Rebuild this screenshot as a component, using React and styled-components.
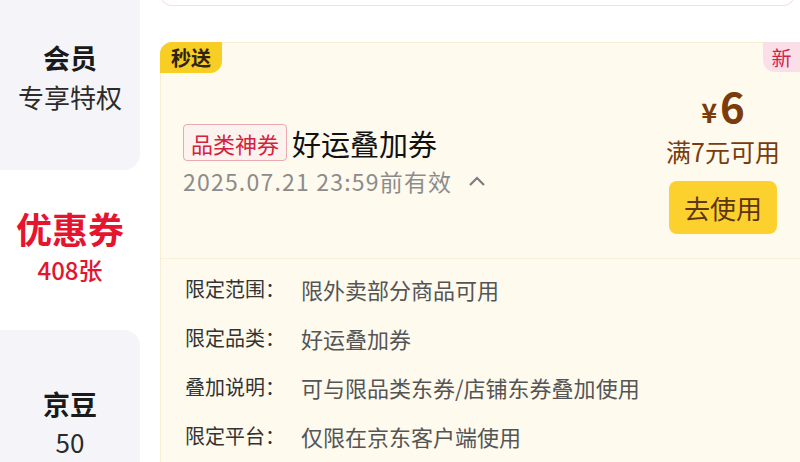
import styled, { createGlobalStyle } from "styled-components"

const GlobalStyle = createGlobalStyle`
body {
    margin: 0;
    background: #ffffff;
    font-family: "Noto Sans CJK SC", "Noto Sans", sans-serif;
}
`

const sideItems = [
    { title: "会员", sub: "专享特权", height: 170, pad: 40, gap: 3, corner: "bottom" },
    { title: "优惠券", sub: "408张", height: 160, pad: 37, gap: 6, active: true },
    { title: "京豆", sub: "50", height: 160, pad: 56, gap: 2, corner: "top" },
]

const details = [
    ["限定范围：", "限外卖部分商品可用"],
    ["限定品类：", "好运叠加券"],
    ["叠加说明：", "可与限品类东券/店铺东券叠加使用"],
    ["限定平台：", "仅限在京东客户端使用"],
]

export default function App() {
    return (
        <Page>
            <GlobalStyle />
            <Sidebar>
                {sideItems.map((item) => (
                    <SideItem key={item.title} $active={item.active} $corner={item.corner} $height={item.height} $pad={item.pad} $gap={item.gap}>
                        <SideTitle $active={item.active}>{item.title}</SideTitle>
                        <SideSub $active={item.active}>{item.sub}</SideSub>
                    </SideItem>
                ))}
            </Sidebar>
            <Main>
                <PrevCard />
                <Coupon>
                    <FastTag>秒送</FastTag>
                    <NewTag>新</NewTag>
                    <CouponHead>
                        <InfoCol>
                            <TitleRow>
                                <KindTag>品类神券</KindTag>
                                <Title>好运叠加券</Title>
                            </TitleRow>
                            <DateRow>
                                2025.07.21 23:59前有效
                                <svg width="18" height="12" viewBox="0 0 18 12">
                                    <path d="M2 10 L9 3 L16 10" fill="none" stroke="#7d7d7d" strokeWidth="2.2" />
                                </svg>
                            </DateRow>
                        </InfoCol>
                        <PriceCol>
                            <Price><small>¥</small>6</Price>
                            <Limit>满7元可用</Limit>
                            <UseButton>去使用</UseButton>
                        </PriceCol>
                    </CouponHead>
                    <DetailList>
                        {details.map(([label, value]) => (
                            <DetailRow key={label}>
                                <DetailLabel>{label}</DetailLabel>
                                <DetailValue>{value}</DetailValue>
                            </DetailRow>
                        ))}
                    </DetailList>
                </Coupon>
            </Main>
        </Page>
    )
}

const Page = styled.div`
display: flex;
width: 800px;
height: 462px;
overflow: hidden;
background: #ffffff;
`

const Sidebar = styled.div`
width: 140px;
flex-shrink: 0;
display: flex;
flex-direction: column;
margin-top: -8px;
background: #ffffff;
`

const SideItem = styled.div`
flex-shrink: 0;
height: ${(p) => p.$height + (p.$corner === "bottom" ? 8 : 0)}px;
box-sizing: border-box;
padding-top: ${(p) => p.$pad + (p.$corner === "bottom" ? 8 : 0)}px;
display: flex;
flex-direction: column;
align-items: center;
gap: ${(p) => p.$gap}px;
background: ${(p) => (p.$active ? "#ffffff" : "#f5f5f9")};
border-bottom-right-radius: ${(p) => (p.$corner === "bottom" ? "16px" : "0")};
border-top-right-radius: ${(p) => (p.$corner === "top" ? "16px" : "0")};
`

const SideTitle = styled.div`
font-size: ${(p) => (p.$active ? "36px" : "27px")};
line-height: ${(p) => (p.$active ? "42px" : "36px")};
font-weight: 700;
color: ${(p) => (p.$active ? "#e5142f" : "#1a1a1a")};
`

const SideSub = styled.div`
font-size: ${(p) => (p.$active ? "24px" : "26px")};
line-height: ${(p) => (p.$active ? "30px" : "36px")};
font-weight: ${(p) => (p.$active ? 500 : 400)};
color: ${(p) => (p.$active ? "#e5142f" : "#2b2b2b")};
`

const Main = styled.div`
flex: 1;
display: flex;
flex-direction: column;
padding-left: 20px;
& > * {
    flex-shrink: 0;
}
`

const PrevCard = styled.div`
height: 16px;
margin-top: -11px;
margin-right: 5px;
border: 1px solid #f6dde3;
border-top: none;
border-radius: 0 0 12px 12px;
background: #ffffff;
`

const Coupon = styled.div`
position: relative;
margin-top: 36px;
margin-right: -12px;
background: #fefaee;
border: 1px solid #f7efd3;
border-radius: 12px;
`

const FastTag = styled.div`
position: absolute;
top: -1px;
left: -1px;
width: 62px;
height: 31px;
display: flex;
align-items: center;
justify-content: center;
background: #f8cd24;
color: #2e2412;
font-size: 20px;
font-weight: 700;
border-radius: 12px 0 12px 0;
`

const NewTag = styled.div`
position: absolute;
top: -1px;
right: 11px;
width: 37px;
height: 30px;
display: flex;
align-items: center;
justify-content: center;
background: #fbdfe8;
color: #d01f4f;
font-size: 20px;
border-radius: 0 0 0 12px;
`

const CouponHead = styled.div`
display: flex;
justify-content: space-between;
align-items: flex-start;
height: 215px;
padding-left: 22px;
padding-right: 23px;
border-bottom: 1px solid #f7f0dc;
`

const InfoCol = styled.div`
margin-top: 81px;
display: flex;
flex-direction: column;
gap: 6px;
`

const TitleRow = styled.div`
display: flex;
align-items: center;
gap: 5px;
`

const KindTag = styled.span`
height: 35px;
display: flex;
align-items: center;
padding: 0 7px;
border: 1px solid #e9aab4;
border-radius: 4px;
background: #fdf3ee;
color: #d4213d;
font-size: 22px;
`

const Title = styled.span`
font-size: 29px;
line-height: 36px;
color: #111111;
`

const DateRow = styled.div`
display: flex;
align-items: center;
gap: 16px;
font-size: 23px;
line-height: 28px;
letter-spacing: 1.2px;
color: #8c8c8c;
`

const PriceCol = styled.div`
margin-top: 42px;
width: 130px;
display: flex;
flex-direction: column;
align-items: center;
`

const Price = styled.div`
font-size: 42px;
line-height: 40px;
font-weight: 700;
color: #7a3c0b;
small {
    font-size: 27px;
    margin-right: 3px;
}
`

const Limit = styled.div`
margin-top: 3px;
font-size: 25px;
line-height: 32px;
color: #7a3c0b;
`

const UseButton = styled.button`
margin-top: 14px;
width: 108px;
height: 53px;
border: none;
border-radius: 8px;
background: #fcd12d;
color: #5c3512;
font-family: inherit;
font-size: 26px;
`

const DetailList = styled.div`
padding: 5px 0 20px 24px;
`

const DetailRow = styled.div`
display: flex;
align-items: center;
height: 49px;
`

const DetailLabel = styled.span`
width: 116px;
font-size: 20px;
color: #333333;
`

const DetailValue = styled.span`
font-size: 22px;
color: #555555;
`
